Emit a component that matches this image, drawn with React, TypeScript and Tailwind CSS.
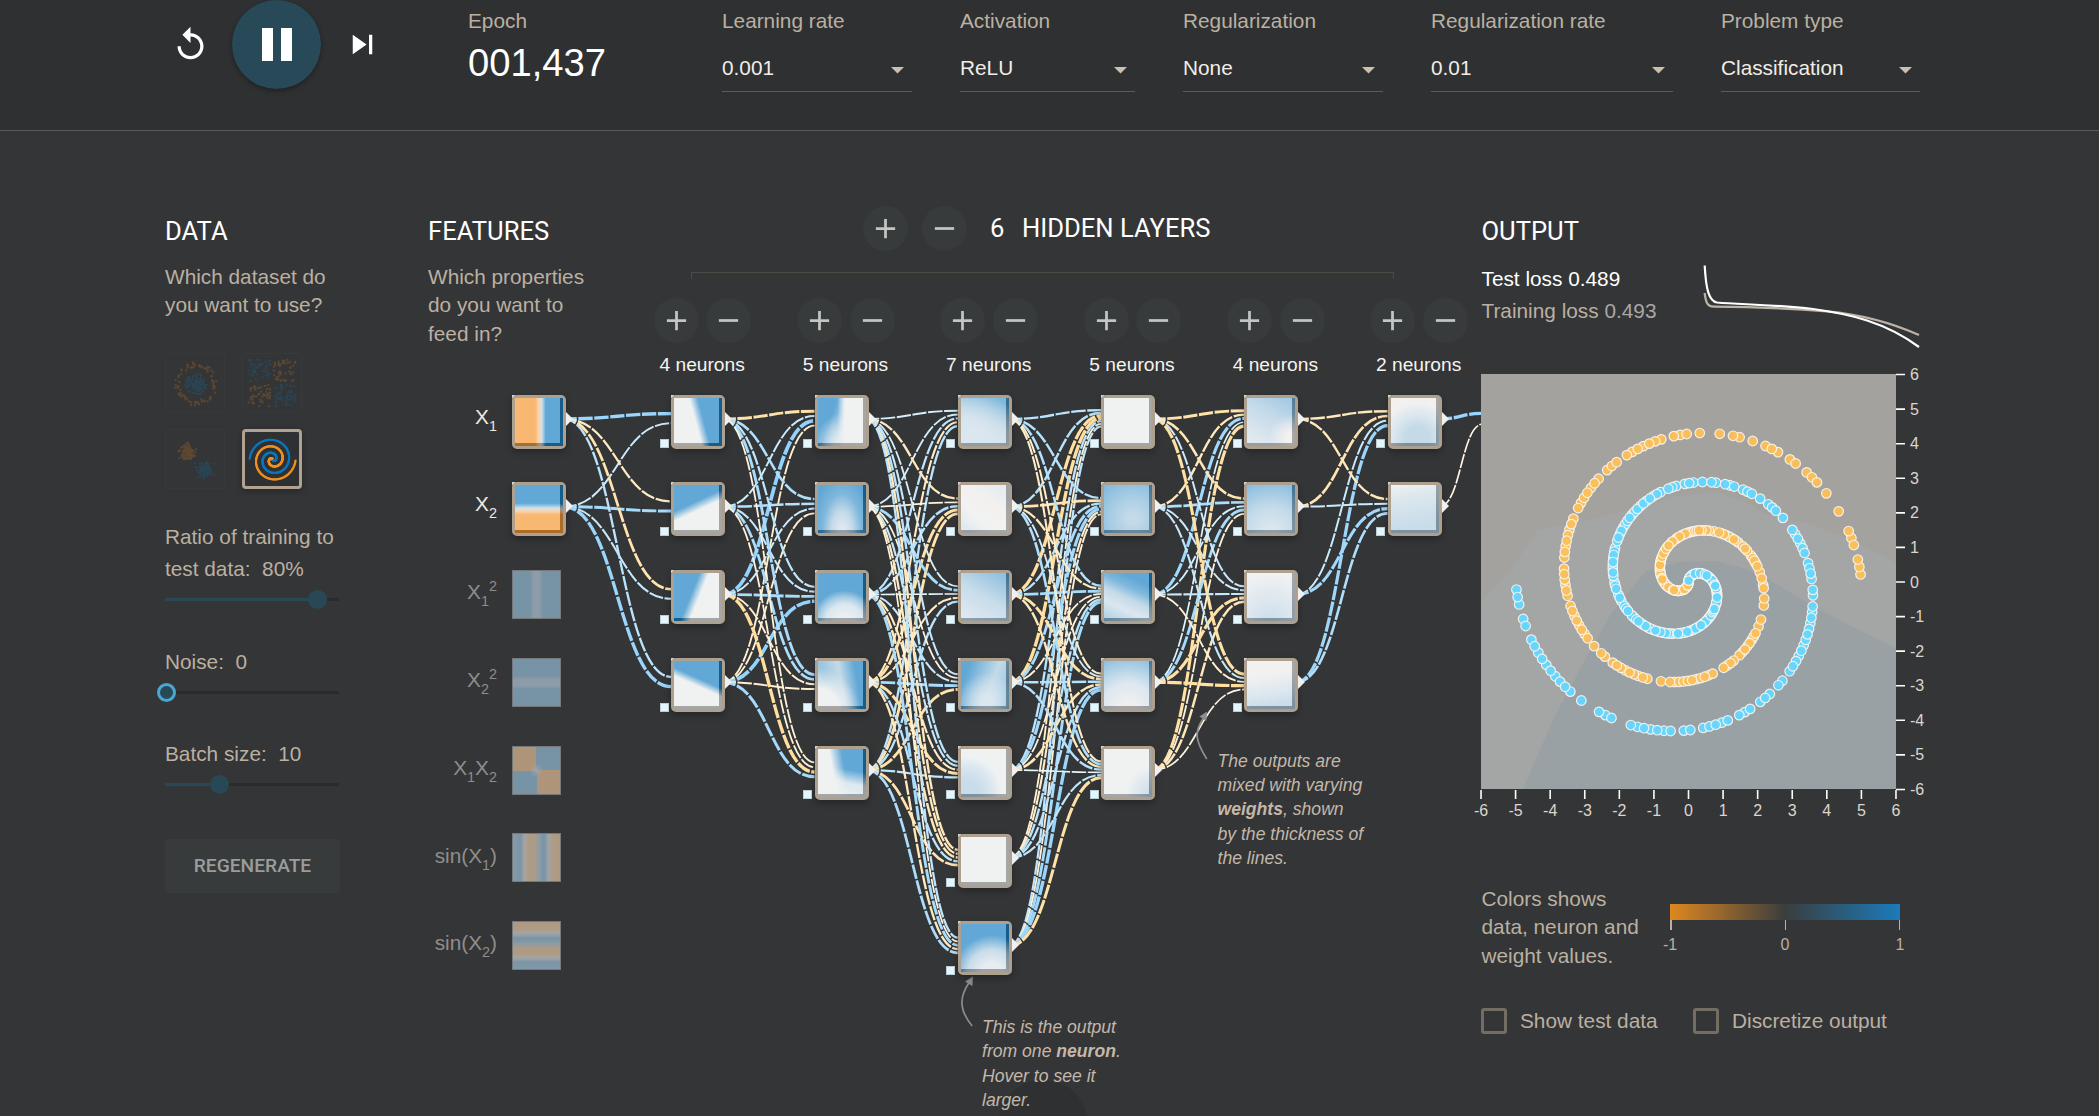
import React from "react";

/* ---------- helpers ---------- */

function makeRandom(seed: number) {
  let s = seed;
  return () => {
    s = (s * 1664525 + 1013904223) % 4294967296;
    return s / 4294967296;
  };
}

/* ---------- header ---------- */

const selects = [
  { label: "Learning rate", value: "0.001", width: "w-[190px]" },
  { label: "Activation", value: "ReLU", width: "w-[175px]" },
  { label: "Regularization", value: "None", width: "w-[200px]" },
  { label: "Regularization rate", value: "0.01", width: "w-[242px]" },
  { label: "Problem type", value: "Classification", width: "w-[199px]" },
];

function Header() {
  return (
    <header className="flex h-[131px] shrink-0 items-start border-b border-[#595b5c] bg-[#2e3032] pl-[171px]">
      <div className="-mt-px flex h-[90px] items-center gap-[22px]">
        <svg className="size-[39px]" viewBox="0 0 24 24" fill="#fff">
          <path d="M12 5V1L7 6l5 5V7c3.31 0 6 2.69 6 6s-2.69 6-6 6-6-2.69-6-6H4c0 4.42 3.58 8 8 8s8-3.58 8-8-3.58-8-8-8z" />
        </svg>
        <button className="flex size-[89px] items-center justify-center gap-2 rounded-full bg-[#284957] shadow-[0_2px_5px_rgba(0,0,0,0.35)]">
          <span className="h-[33px] w-[11px] bg-white" />
          <span className="h-[33px] w-[11px] bg-white" />
        </button>
        <svg className="size-[39px]" viewBox="0 0 24 24" fill="#fff">
          <path d="M6 18l8.5-6L6 6v12zM16 6v12h2V6h-2z" />
        </svg>
      </div>
      <div className="ml-[86px] w-[254px] pt-[9px]">
        <div className="text-[20.8px] leading-6 text-[#bbb0a1]">Epoch</div>
        <div className="mt-[10px] text-[38.2px] leading-10 text-white">001,437</div>
      </div>
      <div className="flex gap-12 pt-[9px]">
        {selects.map((s) => (
          <div key={s.label} className={s.width}>
            <div className="text-[20.8px] leading-6 whitespace-nowrap text-[#bbb0a1]">{s.label}</div>
            <div className="mt-[23px] flex h-[36px] items-start justify-between border-b border-[#5b5c5e] pr-[8px]">
              <span className="text-[20.8px] leading-6 text-[#f1ede6]">{s.value}</span>
              <svg className="mt-[11px] h-[7px] w-[13px]" viewBox="0 0 13 7" fill="#cbbfae">
                <path d="M0 0h13L6.500 6.500z" />
              </svg>
            </div>
          </div>
        ))}
      </div>
    </header>
  );
}

/* ---------- data column ---------- */

type Dot = { x: number; y: number; blue: boolean };

function circleDots(): Dot[] {
  const rnd = makeRandom(7);
  const out: Dot[] = [];
  for (let i = 0; i < 120; i++) {
    const a = rnd() * 6.283;
    const r = rnd() * 11;
    out.push({ x: 30 + r * Math.cos(a), y: 30 + r * Math.sin(a), blue: true });
  }
  for (let i = 0; i < 85; i++) {
    const a = rnd() * 6.283;
    const r = 17 + rnd() * 5.5;
    out.push({ x: 30 + r * Math.cos(a), y: 30 + r * Math.sin(a), blue: false });
  }
  return out;
}

function xorDots(): Dot[] {
  const rnd = makeRandom(20240);
  const out: Dot[] = [];
  for (let i = 0; i < 210; i++) {
    let x = (rnd() - 0.5) * 46;
    let y = (rnd() - 0.5) * 46;
    x += x > 0 ? 1.5 : -1.5;
    y += y > 0 ? 1.5 : -1.5;
    out.push({ x: 29 + x, y: 29 + y, blue: x * y > 0 });
  }
  return out;
}

function gaussDots(): Dot[] {
  const rnd = makeRandom(41);
  const g = () => rnd() + rnd() + rnd() + rnd() - 2;
  const out: Dot[] = [];
  for (let i = 0; i < 120; i++) {
    out.push({ x: 21.5 + g() * 6.5, y: 22 + g() * 6.5, blue: false });
    out.push({ x: 38.5 + g() * 6.5, y: 39.5 + g() * 6.5, blue: true });
  }
  return out;
}

function Thumb({ dots }: { dots: Dot[] }) {
  return (
    <svg className="size-[60px] rounded-[4px] border border-[#38393b]" viewBox="0 0 60 60">
      {dots.map((d, i) => (
        <rect
          key={i}
          x={Math.round(d.x)}
          y={Math.round(d.y)}
          width="2"
          height="2"
          fill={d.blue ? "#2a4554" : "#5d4831"}
        />
      ))}
    </svg>
  );
}

function SpiralThumb() {
  const dots: React.ReactNode[] = [];
  for (let i = 0; i < 250; i++) {
    const r = i * 0.02 * 4.6;
    const t = i * 0.04398;
    dots.push(
      <rect key={"b" + i} x={27.5 + r * Math.sin(t) - 0.9} y={27.5 + r * Math.cos(t) - 0.9} width="2" height="2" fill="#0a76bd" />,
      <rect key={"o" + i} x={27.5 - r * Math.sin(t) - 0.9} y={27.5 - r * Math.cos(t) - 0.9} width="2" height="2" fill="#ef9020" />
    );
  }
  return (
    <div className="size-[60px] rounded-[4px] border-3 border-[#b0a190] bg-[#2e3032] shadow-[0_2px_6px_rgba(0,0,0,0.3)]">
      <svg className="size-[54px]" viewBox="0 0 54 54">
        {dots}
      </svg>
    </div>
  );
}

function Slider({ fill, knob, ring }: { fill: string; knob: string; ring?: boolean }) {
  return (
    <div className="relative flex h-6 w-[174px] items-center">
      <div className="h-[3px] w-full bg-[#2a2b2d]">
        <div className={"h-full bg-[#284855] " + fill} />
      </div>
      <div
        className={
          "absolute size-[19px] rounded-full bg-[#284855] " + knob + (ring ? " border-3 border-[#4ba6d4]" : "")
        }
      />
    </div>
  );
}

function DataColumn() {
  return (
    <section className="w-[263px] shrink-0 pt-[84px] text-[20.8px] text-[#bbb0a1]">
      <h2 className="font-[Roboto,sans-serif] text-[25.6px] leading-8 text-white">DATA</h2>
      <p className="mt-4 h-[90px] w-[180px] leading-[28.3px]">
        Which dataset do
        <br />
        you want to use?
      </p>
      <div className="grid w-max grid-cols-2 gap-x-[17px] gap-y-4">
        <Thumb dots={circleDots()} />
        <Thumb dots={xorDots()} />
        <Thumb dots={gaussDots()} />
        <SpiralThumb />
      </div>
      <div className="mt-8 leading-8">
        Ratio of training to
        <br />
        test data:&nbsp; 80%
      </div>
      <div className="mt-[2px]">
        <Slider fill="w-[152px]" knob="left-[143px]" />
      </div>
      <div className="mt-[35px] leading-8">Noise:&nbsp; 0</div>
      <div className="mt-[2px]">
        <Slider fill="w-0" knob="-left-[8px]" ring />
      </div>
      <div className="mt-[34px] leading-8">Batch size:&nbsp; 10</div>
      <div className="mt-[2px]">
        <Slider fill="w-[54px]" knob="left-[45px]" />
      </div>
      <button className="mt-[43px] flex h-[54px] w-[175px] items-center justify-center rounded-[4px] bg-[#383b3c] font-[Roboto,sans-serif] text-[19.2px] font-medium text-[#9b9c9b]">
        REGENERATE
      </button>
    </section>
  );
}

/* ---------- layer controls ---------- */

function RoundButton({ minus }: { minus?: boolean }) {
  return (
    <button className="flex size-[45px] shrink-0 items-center justify-center rounded-full bg-[#383b3c]">
      <svg className="size-[33px]" viewBox="0 0 24 24" fill="#c4c4c3">
        <path d={minus ? "M19 13H5v-2h14v2z" : "M19 13h-6v6h-2v-6H5v-2h6V5h2v6h6v2z"} />
      </svg>
    </button>
  );
}

function HiddenLayersControls() {
  return (
    <div className="shrink-0 pt-[75px]">
      <div className="flex h-[45px] items-center pl-[232px] font-[Roboto,sans-serif] text-[25.6px] text-white">
        <RoundButton />
        <div className="w-[14px]" />
        <RoundButton minus />
        <span className="ml-[23px] w-[32px]">6</span>
        <span className="whitespace-nowrap">HIDDEN LAYERS</span>
      </div>
      <div className="mt-[21px] ml-[60px] h-[7px] w-[703px] border-x border-t border-[#4e4b46]" />
      <div className="mt-[19px] flex">
        {[4, 5, 7, 5, 4, 2].map((n, i) => (
          <div key={i} className="flex w-[143.300px] shrink-0 flex-col items-center">
            <div className="flex gap-[7.500px]">
              <RoundButton />
              <RoundButton minus />
            </div>
            <div className="mt-[10px] pr-px text-[19.2px] leading-6 text-[#f6f4f0]">{n} neurons</div>
          </div>
        ))}
      </div>
    </div>
  );
}

/* ---------- network diagram ---------- */

const ORIGIN_X = 428;
const ORIGIN_Y = 390;
const columnX = [512, 671.2, 814.5, 957.7, 1101, 1244.2, 1387.5].map((x) => x - ORIGIN_X);
const rowY = (row: number) => 394.6 + row * 87.8 - ORIGIN_Y;

const featurePatterns = [
  "bg-[linear-gradient(90deg,#f9b872_42%,#f6d7b4_50%,#cfe0ea_56%,#62a8d6_64%)]",
  "bg-[linear-gradient(180deg,#62a8d6_38%,#cfe0ea_48%,#f6d7b4_54%,#f9b872_62%)]",
];

const inactiveFeatures = [
  "bg-[linear-gradient(90deg,#7793a6_36%,#8d9ca8_44%,#8d9ca8_56%,#7793a6_64%)]",
  "bg-[linear-gradient(180deg,#7793a6_36%,#8d9ca8_44%,#8d9ca8_56%,#7793a6_64%)]",
  "bg-[radial-gradient(circle_at_50%_50%,#9ca3aa_0%,#9ca3aa88_10%,transparent_22%),conic-gradient(#7793a6_0_25%,#ae957a_25%_50%,#7793a6_50%_75%,#ae957a_75%)]",
  "bg-[linear-gradient(90deg,#8299a8_0%,#7b95a6_16%,#a5a3a1_24%,#b09a82_36%,#ab9c8a_46%,#8b9ca6_56%,#7793a6_66%,#a3a4a6_76%,#b09a82_86%,#ab9a86_100%)]",
  "bg-[linear-gradient(180deg,#ab9a86_0%,#b09a82_14%,#a3a4a6_24%,#7793a6_35%,#8b9ca6_46%,#b09a82_57%,#b09a82_67%,#a3a4a6_76%,#7b95a6_86%,#8299a8_100%)]",
];

const neuronPatterns: string[][] = [
  [
    "bg-[linear-gradient(75deg,#f0f2f2_46%,#62a8d6_60%)]",
    "bg-[linear-gradient(155deg,#62a8d6_38%,#f0f2f2_52%)]",
    "bg-[linear-gradient(112deg,#62a8d6_38%,#f0f2f2_52%)]",
    "bg-[linear-gradient(204deg,#62a8d6_40%,#f0f2f2_52%)]",
  ],
  [
    "bg-[linear-gradient(90deg,transparent_40%,#f0f2f2_56%),radial-gradient(circle_at_60%_100%,#dfe9f0_20%,transparent_60%),linear-gradient(110deg,#62a8d6_30%,#c4dae9_60%)]",
    "bg-[radial-gradient(ellipse_at_50%_100%,#dde8f0_10%,#c4dae9_32%,#8dbfdfaa_58%,transparent_85%),linear-gradient(#62a8d6,#62a8d6)]",
    "bg-[radial-gradient(circle_at_55%_105%,#edf0f2_12%,#dbe7ef_34%,#a9cde4_46%,#62a8d6_58%)]",
    "bg-[radial-gradient(circle_at_0%_100%,#f0f2f2_30%,transparent_60%),linear-gradient(80deg,#9cc6e1_20%,#c4dae9_50%,#62a8d6_78%)]",
    "bg-[linear-gradient(80deg,#f0f2f2_34%,transparent_56%),linear-gradient(190deg,#62a8d6_42%,#dde8f0_66%,#eaeef1_90%)]",
  ],
  [
    "bg-[radial-gradient(circle_at_20%_90%,#dbe7ef_20%,transparent_90%),linear-gradient(200deg,#7fb8dc_10%,#c4dae9_50%,#e1e9ef_90%)]",
    "bg-[linear-gradient(40deg,#e1e9ef_10%,#f0f2f2_30%,#f3f1ef_60%,#e6ecf1_90%)]",
    "bg-[linear-gradient(30deg,#dde8f0_10%,#c8dcea_50%,#8dbfdf_95%)]",
    "bg-[radial-gradient(circle_at_55%_85%,#dbe7ef_10%,transparent_60%),linear-gradient(110deg,#62a8d6_15%,#c4dae9_60%,#8dbfdf_100%)]",
    "bg-[radial-gradient(circle_at_10%_90%,#c8dcea_20%,#dde8f0_45%,#f0f2f2_58%)]",
    "bg-[#f0f2f2]",
    "bg-[radial-gradient(circle_at_65%_105%,#e9edf1_18%,#c8dcea_42%,#62a8d6_66%)]",
  ],
  [
    "bg-[#f0f2f2]",
    "bg-[radial-gradient(circle_at_60%_70%,#c4dae9_10%,#a9cde4_50%,#7fb8dc_100%)]",
    "bg-[linear-gradient(205deg,#62a8d6_20%,#7fb8dc_35%,#c4dae9_52%,#dbe7ef_70%,#a9cde4_100%)]",
    "bg-[radial-gradient(circle_at_50%_100%,#f0eff0_15%,#dbe7ef_50%,#8dbfdf_100%)]",
    "bg-[radial-gradient(circle_at_100%_90%,#cfe0ec_5%,#f0f2f2_40%)]",
  ],
  [
    "bg-[radial-gradient(circle_at_95%_85%,#f4f1ef_10%,transparent_40%),linear-gradient(30deg,#e1e9ef_15%,#c4dae9_60%,#9cc6e1_100%)]",
    "bg-[radial-gradient(circle_at_50%_100%,#dbe7ef_10%,#c4dae9_50%,#86bcde_100%)]",
    "bg-[radial-gradient(circle_at_50%_100%,#cfe0ec_10%,#e1e9ef_50%,#f0f2f2_90%)]",
    "bg-[linear-gradient(170deg,#f2f1f0_30%,#dbe7ef_65%,#c8dcea_90%)]",
  ],
  [
    "bg-[radial-gradient(circle_at_55%_85%,#c4dae9_25%,#dbe7ef_50%,#f2f1f0_75%)]",
    "bg-[linear-gradient(170deg,#f0f0f0_2%,#dde8ee_25%,#c8dcea_80%)]",
  ],
];

// weights[layer][destination][source]
const weights: number[][][] = [
  [
    [0.7, 0.15],
    [-0.25, 0.55],
    [-0.45, 0.2],
    [0.3, 0.7],
  ],
  [
    [-0.55, 0.15, 0.85, -0.12],
    [0.4, 0.35, 0.15, -0.12],
    [0.25, 0.2, 0.5, 0.8],
    [0.5, 0.45, -0.15, -0.15],
    [-0.08, -0.08, -0.7, 0.55],
  ],
  [
    [0.1, 0.12, 0.25, -0.2, 0.3],
    [-0.3, -0.05, 0.35, -0.55, -0.5],
    [0.08, 0.5, 0.03, -0.2, 0.3],
    [0.2, -0.05, 0.2, 0.5, -0.5],
    [0.3, 0.2, -0.2, -0.55, 0.25],
    [-0.3, -0.25, -0.35, 0.3, -0.45],
    [0.25, -0.05, 0.5, -0.3, 0.45],
  ],
  [
    [0.3, 0.35, -0.65, -0.7, 0.3, -0.1, 0.25],
    [0.35, -0.45, 0.3, 0.5, 0.6, -0.2, -0.1],
    [0.35, -0.25, 0.5, -0.1, -0.05, 0.3, 0.5],
    [-0.15, 0.1, -0.5, 0.35, -0.4, 0.3, 0.7],
    [-0.2, 0.4, -0.3, 0.35, 0.03, 0.25, -0.55],
  ],
  [
    [-0.5, -0.3, 0.6, 0.04, -0.6],
    [-0.4, 0.45, 0.1, 0.5, -0.08],
    [0.15, 0.15, 0.2, -0.6, -0.35],
    [-0.6, 0.2, -0.1, -0.65, -0.05],
  ],
  [
    [-0.3, -0.45, 0.15, 0.65],
    [-0.3, 0.15, 0.6, 0.4],
  ],
];

function linkColor(w: number) {
  const a = Math.min(1, Math.sqrt(Math.abs(w)) * 1.1);
  const to = w > 0 ? [146, 210, 252] : [255, 220, 150];
  const from = w > 0 ? [246, 254, 252] : [255, 252, 246];
  const c = from.map((v, i) => Math.round(v + (to[i] - v) * a));
  return "rgb(" + c.join(",") + ")";
}

function curve(x1: number, y1: number, x2: number, y2: number) {
  const m = (x1 + x2) / 2;
  return `M${x1} ${y1}C${m} ${y1} ${m} ${y2} ${x2} ${y2}`;
}

function Links() {
  const items: React.ReactNode[] = [];
  const add = (key: string, d: string, w: number) =>
    items.push(
      <path
        key={key}
        d={d}
        fill="none"
        stroke={linkColor(w)}
        strokeWidth={1.6 + Math.abs(w) * 2.5}
        strokeDasharray="14.4 1.6"
        strokeDashoffset="1.6"
      />
    );
  weights.forEach((layer, l) => {
    layer.forEach((sources, dest) => {
      sources.forEach((w, src) => {
        const n = sources.length;
        const y2 = rowY(dest) + 23.8 + ((src - (n - 1) / 2) / n) * 19.2;
        add(`${l}-${dest}-${src}`, curve(columnX[l] + 51.8, rowY(src) + 24.3, columnX[l + 1], y2), w);
      });
    });
  });
  const sx = columnX[6] + 51.8;
  add("out-0", curve(sx, rowY(0) + 24.3, 1055, 23.3), 0.7);
  add("out-1", curve(sx, rowY(1) + 24.3, 1055, 34), -0.03);
  return (
    <svg className="absolute inset-0 h-full w-full" viewBox="0 0 1053 726">
      {items}
      <g stroke="#8c8d8e" strokeWidth="1.7" fill="none">
        <path d="M778.800 369C767 350 766 342 775.500 328" />
        <path d="M544.200 636C531 620 531 607 541.500 592" />
      </g>
      <g fill="#8c8d8e">
        <path d="M779 321.500l-.6 9.500-7-4.600z" />
        <path d="M545 586.500l-.6 9.500-7.400-4.600z" />
      </g>
    </svg>
  );
}

function NodeBox({ x, y, pattern, bias }: { x: number; y: number; pattern: string; bias?: boolean }) {
  return (
    <div className="absolute size-[54px]" style={{ left: x, top: y }}>
      <div className="absolute top-0 left-0 size-[3px] bg-[#dcdcda]" />
      <div className="absolute inset-0 rounded-[5px] border-3 border-[#aea08f] bg-[#aea08f] shadow-[0_3px_7px_rgba(0,0,0,0.3)]">
        <div className={"relative isolate size-[48px] " + pattern}>
          <div className="absolute top-0 right-0 h-full w-[3px] bg-[#4b4b4b] mix-blend-difference" />
          <div className="absolute bottom-0 left-0 h-[3px] w-[45px] bg-[#4b4b4b] mix-blend-difference" />
        </div>
      </div>
      <svg className="absolute top-[17px] left-[54px] h-[14px] w-[7px]" viewBox="0 0 7 14" fill="#f0f0f0">
        <path d="M0 0l7 7-7 7z" />
      </svg>
      {bias && <div className="absolute top-[44.500px] -left-[11.500px] size-[9px] border border-[#b9cdd3] bg-[#e2f6fc]" />}
    </div>
  );
}

function FeatureLabel({ row, active, children }: { row: number; active?: boolean; children: React.ReactNode }) {
  return (
    <div
      className={
        "absolute right-[984px] h-[48px] text-[20.8px] leading-[43px] whitespace-nowrap " +
        (active ? "text-[#ece8e2]" : "text-[#8f8d8a]")
      }
      style={{ top: rowY(row) }}
    >
      {children}
    </div>
  );
}

const Sub = ({ children }: { children: React.ReactNode }) => (
  <span className="relative top-[7px] text-[14.4px]">{children}</span>
);
const Sup = ({ children }: { children: React.ReactNode }) => (
  <span className="relative -top-[8px] text-[14.4px]">{children}</span>
);

function Network() {
  return (
    <div className="relative h-[726px] w-[1053px] overflow-hidden">
      <div className="absolute top-[690px] left-[570px] size-[90px] rounded-full bg-[#2f3032]" />
      <Links />

      <FeatureLabel row={0} active>X<Sub>1</Sub></FeatureLabel>
      <FeatureLabel row={1} active>X<Sub>2</Sub></FeatureLabel>
      <FeatureLabel row={2}>X<Sub>1</Sub><Sup>2</Sup></FeatureLabel>
      <FeatureLabel row={3}>X<Sub>2</Sub><Sup>2</Sup></FeatureLabel>
      <FeatureLabel row={4}>X<Sub>1</Sub>X<Sub>2</Sub></FeatureLabel>
      <FeatureLabel row={5}>sin(X<Sub>1</Sub>)</FeatureLabel>
      <FeatureLabel row={6}>sin(X<Sub>2</Sub>)</FeatureLabel>

      {featurePatterns.map((p, i) => (
        <NodeBox key={i} x={columnX[0]} y={rowY(i)} pattern={p} />
      ))}
      {inactiveFeatures.map((p, i) => (
        <div
          key={i}
          className={"absolute size-[49px] border border-[#75797c] " + p}
          style={{ left: columnX[0], top: rowY(i + 2) - 0.3 }}
        />
      ))}
      {neuronPatterns.map((layer, l) =>
        layer.map((p, r) => <NodeBox key={l + "-" + r} x={columnX[l + 1]} y={rowY(r)} pattern={p} bias />)
      )}

      <p className="absolute top-[359px] left-[789.500px] text-[17.6px] leading-[24.2px] whitespace-nowrap text-[#c3b8a9] italic">
        The outputs are
        <br />
        mixed with varying
        <br />
        <b>weights</b>, shown
        <br />
        by the thickness of
        <br />
        the lines.
      </p>
      <p className="absolute top-[625px] left-[554px] text-[17.6px] leading-[24.4px] whitespace-nowrap text-[#c3b8a9] italic">
        This is the output
        <br />
        from one <b>neuron</b>.
        <br />
        Hover to see it
        <br />
        larger.
      </p>
    </div>
  );
}

/* ---------- output column ---------- */

const missingOrange = new Set([
  4, 8, 9, 11, 12, 14, 18, 21, 25, 27, 30, 32, 33, 35, 39, 47, 51, 59, 68, 75, 84, 86, 89, 99, 100, 102, 114, 115,
]);
const missingBlue = new Set([
  4, 7, 18, 20, 21, 25, 26, 34, 37, 43, 47, 51, 54, 68, 71, 76, 83, 84, 86, 90, 92, 96, 100,
]);

function spiralPoints() {
  const rnd = makeRandom(5);
  const pts: { x: number; y: number; blue: boolean; order: number }[] = [];
  for (let d = 1; d <= 250; d++) {
    const r = 5 - 0.02 * d;
    const a = 0.04398 * d;
    const x = r * Math.cos(a);
    const y = r * Math.sin(a);
    if (!missingOrange.has(d) && (d < 116 || rnd() > 0.18)) pts.push({ x, y, blue: false, order: rnd() });
    if (!missingBlue.has(d) && (d < 101 || rnd() > 0.18)) pts.push({ x: -x, y: -y, blue: true, order: rnd() });
  }
  return pts.sort((p, q) => p.order - q.order);
}

const UNIT = 34.58;

function OutputPlot() {
  const ticks = [-6, -5, -4, -3, -2, -1, 0, 1, 2, 3, 4, 5, 6];
  return (
    <svg className="h-[445px] w-[439px] overflow-visible" viewBox="0 0 439 445">
      <rect width="415" height="415" fill="#a4a29f" />
      <path
        d="M0 228L24 204 57 156 105 147 150 135 197 122 235 118 265 128 283 140 330 150 370 166 415 189V415H0z"
        fill="#a4a6a5"
      />
      <path
        d="M42 415L70 350 99 295 130 240 165 197 200 188 235 187 265 195 290 207 330 231 370 252 415 274V415z"
        fill="#99a1a5"
      />
      {spiralPoints().map((p, i) => (
        <circle
          key={i}
          cx={207.5 + p.x * UNIT}
          cy={208 - p.y * UNIT}
          r="4.8"
          fill={p.blue ? "#66d6ff" : "#fcc05a"}
          stroke="#f8f6f0"
          strokeWidth="1.2"
          fillOpacity="0.96"
          strokeOpacity="0.9"
        />
      ))}
      <g stroke="#fffdf6" strokeWidth="1.6">
        {ticks.map((t) => (
          <path key={t} d={`M415 ${208 - t * UNIT}h9M${207.5 + t * UNIT} 416v9`} />
        ))}
      </g>
      <g fill="#dcd6cc" fontSize="16">
        {ticks.map((t) => (
          <React.Fragment key={t}>
            <text x="429" y={213.5 - t * UNIT}>
              {t}
            </text>
            <text x={207.5 + t * UNIT} y="441.5" textAnchor="middle">
              {t}
            </text>
          </React.Fragment>
        ))}
      </g>
    </svg>
  );
}

function LossChart() {
  return (
    <svg className="h-[90px] w-[220px]" viewBox="1700 262 220 90" fill="none" strokeWidth="2.2">
      <path
        d="M1704.600 293C1706 304 1708 306.700 1714 306.700C1760 307 1790 308.500 1827 311.300C1862 314.500 1890 322 1919 335"
        stroke="#bdb2a4"
      />
      <path
        d="M1704.700 265.500C1706 290 1709 301 1717 302.500C1740 304.500 1775 304.500 1813 309C1850 314 1885 322 1919 347"
        stroke="#ffffff"
      />
    </svg>
  );
}

function ColorScale() {
  return (
    <div className="mt-[19px] w-[230px] text-[16px] text-[#bbb0a1]">
      <div className="h-4 bg-[linear-gradient(90deg,#df871f,#3b3d3e_50%,#1a7bbb)]" />
      <div className="flex h-[10px] justify-between">
        <span className="w-[1.600px] bg-[#bbb0a1]" />
        <span className="w-px bg-[#bbb0a1]" />
        <span className="w-px bg-[#bbb0a1]" />
      </div>
      <div className="mt-[6px] -ml-[10px] flex w-[250px] justify-between leading-[18px]">
        <span className="w-5 text-center">-1</span>
        <span className="w-5 text-center">0</span>
        <span className="w-5 text-center">1</span>
      </div>
    </div>
  );
}

function CheckBox({ label }: { label: string }) {
  return (
    <label className="flex items-center gap-[13px] whitespace-nowrap">
      <span className="size-[26px] rounded-[3px] border-3 border-[#746d62]" />
      {label}
    </label>
  );
}

function OutputColumn() {
  return (
    <section className="relative z-10 w-[439px] shrink-0 pt-[84px] text-[20.8px] text-[#bbb0a1]">
      <h2 className="pl-[0.500px] font-[Roboto,sans-serif] text-[25.6px] leading-8 text-white">OUTPUT</h2>
      <div className="mt-[15px] flex h-[112px] justify-between">
        <div className="pt-px pl-[0.500px] leading-8 whitespace-nowrap">
          <div className="text-white">Test loss 0.489</div>
          <div>
            Training loss <span className="text-[#aaa7a5]">0.493</span>
          </div>
        </div>
        <LossChart />
      </div>
      <OutputPlot />
      <div className="mt-[66px] flex h-[85px]">
        <p className="w-[189px] pl-[0.500px] leading-[28.4px]">
          Colors shows
          <br />
          data, neuron and
          <br />
          weight values.
        </p>
        <ColorScale />
      </div>
      <div className="mt-[38px] flex h-[26px] items-center">
        <div className="w-[212px]">
          <CheckBox label="Show test data" />
        </div>
        <CheckBox label="Discretize output" />
      </div>
    </section>
  );
}

/* ---------- page ---------- */

export default function App() {
  return (
    <div className="flex h-[1116px] w-[2099px] flex-col overflow-hidden bg-[#343537] font-['Liberation_Sans',Arial,sans-serif]">
      <Header />
      <main className="flex min-h-0 flex-1 pl-[165px]">
        <DataColumn />
        <section className="w-[1053px] shrink-0">
          <div className="flex h-[259px]">
            <div className="w-[203px] shrink-0 pt-[84px]">
              <h2 className="font-[Roboto,sans-serif] text-[25.6px] leading-8 text-white">FEATURES</h2>
              <p className="mt-4 text-[20.8px] leading-[28.3px] text-[#bbb0a1]">
                Which properties
                <br />
                do you want to
                <br />
                feed in?
              </p>
            </div>
            <HiddenLayersControls />
          </div>
          <Network />
        </section>
        <OutputColumn />
      </main>
    </div>
  );
}
